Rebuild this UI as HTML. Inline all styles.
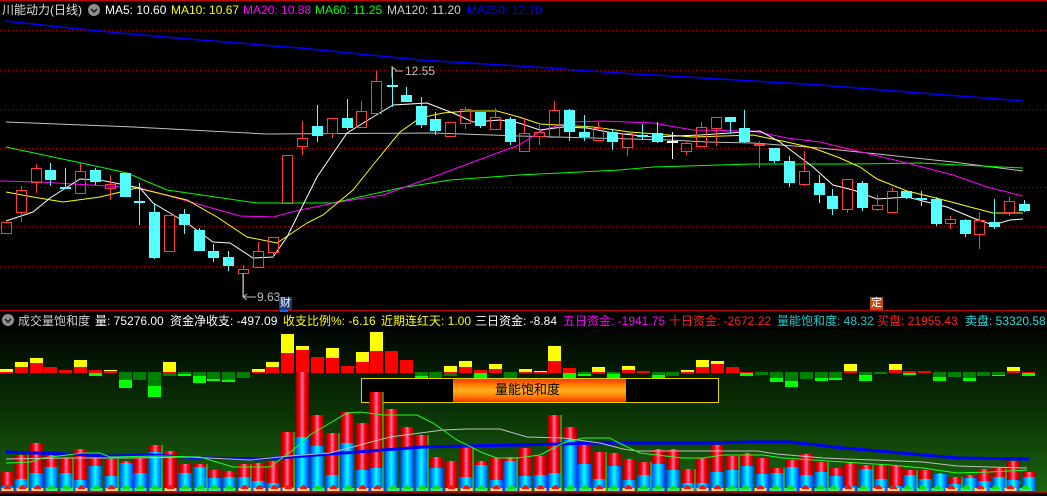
<!DOCTYPE html>
<html><head><meta charset="utf-8">
<style>
html,body{margin:0;padding:0;background:#000;width:1047px;height:496px;overflow:hidden}
#c{position:absolute;left:0;top:0}
.t{position:absolute;font:12px "Liberation Sans","Noto Sans CJK SC",sans-serif;white-space:nowrap;line-height:14px}
</style></head><body>
<svg id="c" width="1047" height="496" xmlns="http://www.w3.org/2000/svg">
<defs>
<linearGradient id="bg" x1="0" y1="0" x2="0" y2="1">
<stop offset="0" stop-color="#010601"/><stop offset="0.5" stop-color="#0a3306"/><stop offset="1" stop-color="#1c6810"/></linearGradient>
<linearGradient id="rg" x1="0" y1="0" x2="1" y2="0">
<stop offset="0" stop-color="#900000"/><stop offset="0.3" stop-color="#ff0000"/><stop offset="0.5" stop-color="#ff70b0"/><stop offset="0.7" stop-color="#ff0000"/><stop offset="1" stop-color="#900000"/></linearGradient>
<linearGradient id="cg" x1="0" y1="0" x2="1" y2="0">
<stop offset="0" stop-color="#0040ff"/><stop offset="0.5" stop-color="#00ffff"/><stop offset="1" stop-color="#0040ff"/></linearGradient>
<linearGradient id="og" x1="0" y1="0" x2="0" y2="1">
<stop offset="0" stop-color="#ff3000"/><stop offset="0.25" stop-color="#ff8000"/><stop offset="0.5" stop-color="#ffb020"/><stop offset="0.75" stop-color="#ff8000"/><stop offset="1" stop-color="#ff3000"/></linearGradient>
</defs>
<rect x="0" y="0" width="1047" height="1" fill="#c00000"/>
<g id="grid"></g>
<g id="main"></g>
<rect x="0" y="310" width="1047" height="1" fill="#c00000"/>
<rect x="280" y="310" width="8" height="2" fill="#2060ff"/>
<rect x="0" y="330" width="1047" height="166" fill="url(#bg)"/>
<g id="low"></g>
</svg>
<div class="t" style="left:2px;top:3px;color:#e0e0e0">川能动力(日线)</div>
<div class="t" style="left:105px;top:3px;color:#fff">MA5: 10.60</div>
<div class="t" style="left:171px;top:3px;color:#ffff00">MA10: 10.67</div>
<div class="t" style="left:243px;top:3px;color:#ff00ff">MA20: 10.88</div>
<div class="t" style="left:315px;top:3px;color:#00ff00">MA60: 11.25</div>
<div class="t" style="left:387px;top:3px;color:#d0d0d0">MA120: 11.20</div>
<div class="t" style="left:467px;top:3px;color:#0000ff">MA250: 12.10</div>
<div class="t" style="left:18px;top:314px;color:#d0d0d0">成交量饱和度</div>
<div class="t" style="left:95px;top:314px;color:#fff">量: 75276.00</div>
<div class="t" style="left:170px;top:314px;color:#fff">资金净收支: -497.09</div>
<div class="t" style="left:283px;top:314px;color:#ffff00">收支比例%: -6.16</div>
<div class="t" style="left:381px;top:314px;color:#ffff00">近期连红天: 1.00</div>
<div class="t" style="left:475px;top:314px;color:#fff">三日资金: -8.84</div>
<div class="t" style="left:563px;top:314px;color:#ff00ff">五日资金: -1941.75</div>
<div class="t" style="left:669px;top:314px;color:#ff2020">十日资金: -2672.22</div>
<div class="t" style="left:777px;top:314px;color:#20c8c8">量能饱和度: 48.32</div>
<div class="t" style="left:877px;top:314px;color:#ff2020">买盘: 21955.43</div>
<div class="t" style="left:965px;top:314px;color:#20e0e0">卖盘: 53320.58</div>
<div class="t" style="left:405px;top:64px;color:#c0c0c0">12.55</div>
<div class="t" style="left:257px;top:290px;color:#c0c0c0">9.63</div>
<div class="t" style="left:279px;top:297px;color:#fff;background:#1a3a78;font-size:11px;line-height:13px;padding:0 1px">财</div>
<div class="t" style="left:870px;top:297px;color:#fff;background:#c04a10;font-size:11px;line-height:13px;padding:0 1px">定</div>
<div class="t" style="left:495px;top:383px;color:#000;font-size:13px">量能饱和度</div>
<script>
var NS='http://www.w3.org/2000/svg';
function E(p,tag,a){var e=document.createElementNS(NS,tag);for(var k in a)e.setAttribute(k,a[k]);p.appendChild(e);return e;}
var svg=document.getElementById('c');
var grid=document.getElementById('grid'),main=document.getElementById('main'),low=document.getElementById('low');
[30,70,109,148,187,226,266].forEach(function(y){E(grid,'line',{x1:0,y1:y+.5,x2:1047,y2:y+.5,stroke:'#b00000','stroke-dasharray':'1 3'});});
// icons
[[94,10],[8,320]].forEach(function(p){E(svg,'circle',{cx:p[0],cy:p[1],r:6,fill:'#909090'});E(svg,'path',{d:'M'+(p[0]-3)+' '+(p[1]-1)+'l3 3l3 -3',stroke:'#222',fill:'none','stroke-width':1.6});});
function PL(g,pts,col,w){E(g,'polyline',{points:pts,fill:'none',stroke:col,'stroke-width':w||1});}
// MA lines
PL(main,'6,21 60,27 120,33 200,40 300,48 420,60 519,66 620,73 720,79 820,85 920,93 1023,101','#0000ff',1.5);
PL(main,'6,122 133,127 267,134 433,133 519,136 670,140 707,142 753,143 820,148 887,155 953,162 1023,171','#c0c0c0');
PL(main,'6,147 100,167 127,173 167,190 257,203 333,203 400,188 450,180 519,175 620,170 653,167 753,164 853,164 920,163 1023,168','#00ff00');
PL(main,'0,181 40,182 140,188 173,197 240,216 273,217 300,210 340,202 383,195 433,177 473,162 519,145 543,130 570,122 603,121 653,123 693,130 753,131 787,138 820,142 853,150 907,163 953,175 987,187 1023,196','#ff00ff');
PL(main,'6,192 33,197 63,202 100,197 137,188 187,200 217,217 247,237 277,243 307,223 323,215 353,190 377,160 400,132 420,118 443,113 467,111 497,111 519,117 540,124 593,127 630,132 693,137 753,135 787,142 813,148 840,158 860,167 877,179 907,191 940,199 970,207 993,213 1023,213','#ffff00');
PL(main,'6,221 33,212 50,198 80,179 100,180 140,188 153,203 187,223 213,242 230,243 253,258 273,257 287,237 317,177 347,133 373,117 393,105 427,103 453,113 473,122 500,120 519,123 540,130 563,127 587,128 613,133 653,137 700,135 760,131 780,142 813,167 833,185 853,190 877,199 907,197 947,207 973,218 993,225 1010,220 1023,219','#ffffff');
var C=[[1,222,233,222,233,'r'],[16,190,212,186,222,'r'],[31,168,182,164,193,'r'],[45,170,180,163,186,'c'],[60,187,189,168,189,'c'],[75,171,193,163,193,'r'],[90,170,182,168,185,'c'],[105,184,188,175,200,'r'],[120,173,197,173,197,'c'],[134,201,203,183,225,'c'],[149,212,258,203,259,'c'],[164,215,251,215,251,'r'],[179,214,225,209,234,'c'],[194,230,251,228,251,'c'],[208,251,258,244,262,'c'],[223,257,266,251,271,'c'],[238,269,273,265,297,'r'],[253,251,267,242,268,'r'],[268,237,252,237,258,'r'],[282,155,203,155,203,'r'],[297,138,146,121,155,'r'],[312,126,136,105,142,'c'],[327,118,133,118,138,'r'],[342,118,128,99,130,'c'],[356,111,127,101,127,'r'],[371,81,113,71,113,'r'],[387,85,87,67,107,'c'],[401,95,102,87,102,'c'],[416,106,125,97,128,'c'],[430,119,131,112,135,'c'],[445,122,136,122,136,'r'],[460,109,123,107,129,'r'],[475,112,126,112,128,'c'],[490,117,129,108,129,'r'],[505,119,142,117,145,'c'],[519,133,151,118,151,'r'],[534,132,136,125,145,'r'],[549,110,137,101,137,'r'],[564,110,132,109,141,'c'],[579,132,137,115,141,'c'],[593,128,140,122,140,'r'],[607,132,142,130,150,'c'],[622,133,147,131,156,'r'],[637,135,137,124,140,'c'],[652,133,142,122,143,'c'],[667,141,143,132,159,'w'],[681,143,151,142,155,'r'],[696,127,146,122,146,'r'],[711,117,128,117,146,'r'],[725,117,122,117,133,'c'],[739,128,142,110,143,'c'],[754,144,145,141,168,'r'],[769,148,161,148,163,'c'],[784,161,183,156,187,'c'],[799,171,184,151,186,'r'],[814,183,195,175,203,'c'],[827,196,209,189,215,'c'],[842,179,209,179,213,'r'],[857,183,208,181,211,'c'],[872,205,209,195,211,'r'],[887,191,212,188,212,'r'],[901,191,198,191,199,'c'],[916,198,200,191,206,'c'],[931,199,224,197,226,'c'],[945,219,223,216,229,'r'],[960,220,234,219,237,'c'],[974,220,234,212,249,'r'],[989,222,227,199,229,'c'],[1004,201,212,197,216,'r'],[1019,204,211,200,212,'c']];
C.forEach(function(c){var x=c[0],cx=x+5.5,col=c[5]=='r'?'#ff3b3b':(c[5]=='c'?'#54ffff':'#ffffff');
 if(c[5]=='r'){E(main,'line',{x1:cx,y1:c[3],x2:cx,y2:c[1],stroke:col});E(main,'line',{x1:cx,y1:c[2],x2:cx,y2:c[4],stroke:col});E(main,'rect',{x:x+.5,y:c[1]+.5,width:10,height:Math.max(1,c[2]-c[1]),fill:'none',stroke:col});}
 else{E(main,'line',{x1:cx,y1:c[3],x2:cx,y2:c[4],stroke:col});E(main,'rect',{x:x,y:c[1],width:11,height:Math.max(1,c[2]-c[1]),fill:col});}
});
E(main,'path',{d:'M392 78V66M392 67L396 70M395 71H403',stroke:'#c0c0c0',fill:'none'});
E(main,'path',{d:'M243 273V297M243 297H256M243 297L247 294M243 297L247 300',stroke:'#c0c0c0',fill:'none'});
// lower upper bars
function zy(z){return z/3+330;}
var U=[[0,117,126,131,131],[15,96,111,126,126],[30,84,99,126,126],[44,111,111,126,126],[59,120,120,126,126],[74,90,111,126,126],[89,120,120,129,138],[104,120,123,126,126],[119,129,129,150,174],[133,129,129,150,150],[148,129,129,168,201],[163,96,126,138,138],[178,129,129,132,138],[193,129,129,138,159],[207,129,129,147,153],[222,129,129,150,156],[237,129,129,144,144],[252,117,126,126,126],[266,96,111,126,126],[281,12,69,126,126],[296,48,60,126,126],[311,81,81,126,126],[326,54,84,126,126],[341,108,108,126,126],[356,66,96,126,126],[370,6,63,126,126],[385,63,63,126,126],[400,90,90,126,126],[415,129,129,138,144],[429,129,129,144,144],[444,108,126,138,138],[459,93,111,126,126],[474,120,120,129,144],[489,102,117,126,126],[504,129,129,144,144],[519,117,126,131,131],[534,123,126,131,131],[548,48,93,126,126],[563,114,114,129,144],[578,129,129,132,138],[592,111,126,132,132],[607,129,129,131,144],[622,108,120,126,126],[637,123,123,126,126],[652,129,129,135,144],[666,129,129,138,138],[681,120,126,132,132],[696,90,111,126,126],[711,93,102,126,126],[726,111,111,126,126],[740,126,126,129,138],[755,129,129,135,135],[770,129,129,144,156],[785,129,129,153,171],[800,129,129,147,147],[815,129,129,144,153],[829,129,129,144,150],[844,102,123,126,126],[859,129,129,135,153],[874,129,129,132,132],[889,102,120,126,126],[903,123,123,129,135],[918,123,123,126,126],[933,129,129,141,153],[948,129,129,141,141],[963,129,129,144,153],[977,129,129,138,138],[992,129,129,135,138],[1007,111,123,126,126],[1022,126,126,129,138]];
U.forEach(function(u){var x=u[0],w=13;
 if(u[3]>126)E(low,'rect',{x:x,y:zy(126),width:w,height:(u[3]-126)/3,fill:'#008000'});
 if(u[4]>u[3])E(low,'rect',{x:x,y:zy(u[3]),width:w,height:(u[4]-u[3])/3,fill:'#00ff00'});
 if(u[2]<129)E(low,'rect',{x:x,y:zy(u[2]),width:w,height:(129-u[2])/3,fill:'#ff0000'});
 if(u[1]<u[2])E(low,'rect',{x:x,y:zy(u[1]),width:w,height:(u[2]-u[1])/3,fill:'#ffff00'});
});
E(low,'rect',{x:361.5,y:378.5,width:357,height:24,fill:'#000',stroke:'#e0d000'});
E(low,'rect',{x:453,y:379,width:173,height:23,fill:'url(#og)'});
var B=[[0,472,486],[14,455,479],[29,443,473],[44,455,467],[59,458,473],[73,449,480],[88,458,466],[104,459,476],[119,461,463],[133,458,473],[148,445,452],[163,451,490],[178,464,473],[193,464,467],[207,470,478],[222,471,477],[237,464,477],[251,463,481],[266,461,483],[280,432,487],[295,372,437],[310,415,446],[325,433,475],[340,412,443],[355,423,470],[369,392,468],[384,409,450],[400,427,447],[414,435,448],[429,457,468],[444,461,488],[459,447,477],[474,461,465],[489,458,480],[503,457,461],[518,448,476],[533,456,475],[547,415,473],[563,427,440],[577,444,464],[592,452,479],[607,453,466],[622,459,480],[637,462,475],[651,449,464],[666,449,470],[681,469,483],[695,458,483],[710,445,472],[725,456,470],[740,453,466],[755,458,474],[770,468,473],[785,460,467],[799,454,475],[814,462,472],[829,468,476],[843,462,486],[859,465,469],[874,465,479],[889,466,486],[903,470,475],[918,470,479],[933,473,474],[948,477,484],[963,475,478],[977,469,481],[992,468,477],[1006,461,480],[1022,472,477]];
B.forEach(function(b,i){var x=b[0];
 E(low,'rect',{x:x+.5,y:b[1],width:13.5,height:491-b[1],fill:'url(#rg)'});
 E(low,'rect',{x:x+.5,y:b[2],width:13.5,height:491-b[2],fill:'url(#cg)'});
 if(i%3==1)E(low,'line',{x1:x+14,y1:b[1],x2:x+14,y2:491,stroke:'#20ff20'});
});
PL(low,'6,452 37,453 67,454 110,456 153,455 200,458 260,459 290,457 330,454 370,451 423,447 517,445 600,443 670,443 717,443 750,442 790,442 817,445 843,448 890,452 923,455 957,458 1029,459','#0000ff',3);
PL(low,'6,459 67,458 133,458 187,457 250,460 290,456 330,453 390,437 443,430 467,429 500,429 527,437 563,438 600,443 623,449 637,451 757,451 777,454 823,458 873,460 923,462 957,466 990,467 1027,468','#c0c0c0');
PL(low,'6,463 30,462 43,458 83,453 100,453 110,457 160,456 200,457 233,467 270,467 293,450 310,435 347,413 360,412 383,415 417,415 433,423 457,440 483,453 497,458 517,458 540,455 563,443 583,438 610,438 617,442 640,453 683,458 703,458 723,455 763,455 783,458 843,462 890,465 923,468 957,473 990,472 1027,470','#20ff20');
C.forEach(function(c){var cx=c[0]+6.5,red=c[5]=='r';
 E(low,'rect',{x:cx-6,y:488,width:12,height:3,fill:red?'#ffd070':'#40e090'});
 E(low,'path',{d:'M'+(cx-4)+' 489Q'+cx+' 481 '+(cx+4)+' 489Z',fill:red?'#ff1010':'#10e010'});
});
E(low,'rect',{x:0,y:492,width:1047,height:1,fill:'#a00000'});
E(low,'rect',{x:0,y:493,width:1047,height:3,fill:'#000'});
</script>
</body></html>
